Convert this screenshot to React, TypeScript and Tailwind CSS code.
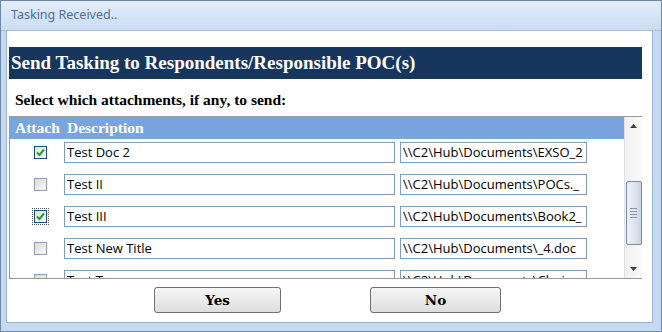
import React from "react";

const rows = [
  { d: "Test Doc 2", p: "\\\\C2\\Hub\\Documents\\EXSO_2", c: true },
  { d: "Test II", p: "\\\\C2\\Hub\\Documents\\POCs._", c: false },
  { d: "Test III", p: "\\\\C2\\Hub\\Documents\\Book2_", c: true, f: true },
  { d: "Test New Title", p: "\\\\C2\\Hub\\Documents\\_4.doc", c: false },
  { d: "Test Two", p: "\\\\C2\\Hub\\Documents\\Choice", c: false },
];

function Check({ checked, focus }: { checked: boolean; focus?: boolean }) {
  return (
    <div className={focus ? "w-[15px] h-[15px] flex items-center justify-center outline outline-1 outline-dotted outline-[#555]" : "w-[15px] h-[15px] flex items-center justify-center"}>
      <div
        className={
          "w-[13px] h-[13px] border flex items-center justify-center " +
          (checked ? "border-[#1c4f7c] bg-gradient-to-br from-[#e0e0e0] to-white" : "border-[#8a9fb8] bg-gradient-to-br from-[#dcdcdc] to-[#f8f8f8]")
        }
      >
        {checked && (
          <svg width="9" height="9" viewBox="0 0 9 9">
            <path d="M1 4.5 L3.5 7 L8 1.5" stroke="#21a121" strokeWidth="2" fill="none" />
          </svg>
        )}
      </div>
    </div>
  );
}

export default function App() {
  return (
    <div className="w-[662px] h-[332px] bg-[#c5d9f1] border border-[#6f87a6] flex flex-col overflow-hidden" style={{ fontFamily: "'Open Sans', sans-serif" }}>
      <div className="h-[30px] shrink-0 bg-gradient-to-b from-[#e3edf9] to-[#cbdcf2] border-b border-[#a8bfdc] flex items-center pl-[10px] text-[12.5px] text-[#4e6f9e]" style={{ fontFamily: "'Noto Sans', sans-serif" }}>
        Tasking Received..
      </div>
      <div className="flex flex-1 pl-[5px] pr-[8px] pb-[8px]">
        <div className="flex-1 bg-white border-l border-[#9bb4d4] border-r border-b flex flex-col pl-[2px] pr-[10px]" style={{ fontFamily: "'Liberation Serif', serif" }}>
          <div className="mt-[16px] h-[32px] shrink-0 bg-[#17365d] text-white font-bold text-[19px] flex items-center pl-[2px]">
            Send Tasking to Respondents/Responsible POC(s)
          </div>
          <div className="mt-[13px] pl-[6px] text-[15.5px] font-bold text-black leading-[16px]">
            Select which attachments, if any, to send:
          </div>
          <div className="mt-[8px] h-[163px] shrink-0 border border-[#9a9a9a] border-r-0 flex overflow-hidden">
            <div className="flex-1 flex flex-col overflow-hidden">
              <div className="h-[22px] shrink-0 bg-[#78a5df] text-white font-bold text-[15.5px] flex items-center">
                <span className="pl-[5px] w-[57px]">Attach</span>
                <span>Description</span>
              </div>
              {rows.map((r, i) => (
                <div key={i} className="h-[32px] shrink-0 flex items-start pt-[3px]" style={{ fontFamily: "'Open Sans', sans-serif" }}>
                  <div className="w-[54px] h-[21px] flex items-center justify-end pr-[16px]">
                    <Check checked={r.c} focus={r.f} />
                  </div>
                  <div className="w-[331px] h-[21px] border border-[#7f9db9] text-[13px] leading-[19px] pl-[2px] text-black overflow-hidden whitespace-nowrap">
                    {r.d}
                  </div>
                  <div className="ml-[5px] w-[187px] h-[21px] border border-[#7f9db9] text-[13px] leading-[19px] pl-[2px] text-black overflow-hidden whitespace-nowrap">
                    {r.p}
                  </div>
                </div>
              ))}
            </div>
            <div className="w-[18px] border-l border-[#e0e0e0] bg-gradient-to-r from-[#f0f0f0] to-[#fafafa] flex flex-col items-center">
              <div className="h-[18px] flex items-center justify-center">
                <svg width="7" height="4" viewBox="0 0 7 4"><path d="M0 4 L3.5 0 L7 4Z" fill="#404040" /></svg>
              </div>
              <div className="mt-[46px] w-[16px] h-[64px] border border-[#7a8aa0] rounded-[2px] bg-gradient-to-r from-[#eef2f8] via-[#dfe6f0] to-[#c9d3e2] flex flex-col items-center justify-center gap-[2px]">
                <div className="w-[7px] h-px bg-[#8a97aa]" />
                <div className="w-[7px] h-px bg-[#8a97aa]" />
                <div className="w-[7px] h-px bg-[#8a97aa]" />
                <div className="w-[7px] h-px bg-[#8a97aa]" />
              </div>
              <div className="flex-1" />
              <div className="h-[18px] flex items-center justify-center">
                <svg width="7" height="4" viewBox="0 0 7 4"><path d="M0 0 L3.5 4 L7 0Z" fill="#404040" /></svg>
              </div>
            </div>
          </div>
          <div className="mt-[8px] flex pl-[145px]" style={{ fontFamily: "'DejaVu Serif', serif" }}>
            <button className="w-[127px] h-[26px] border border-[#707070] rounded-[3px] bg-gradient-to-b from-[#f6f6f6] to-[#dedede] text-[13.5px] font-bold text-black">
              Yes
            </button>
            <button className="ml-[89px] w-[131px] h-[26px] border border-[#707070] rounded-[3px] bg-gradient-to-b from-[#f6f6f6] to-[#dedede] text-[13.5px] font-bold text-black">
              No
            </button>
          </div>
        </div>
      </div>
    </div>
  );
}
